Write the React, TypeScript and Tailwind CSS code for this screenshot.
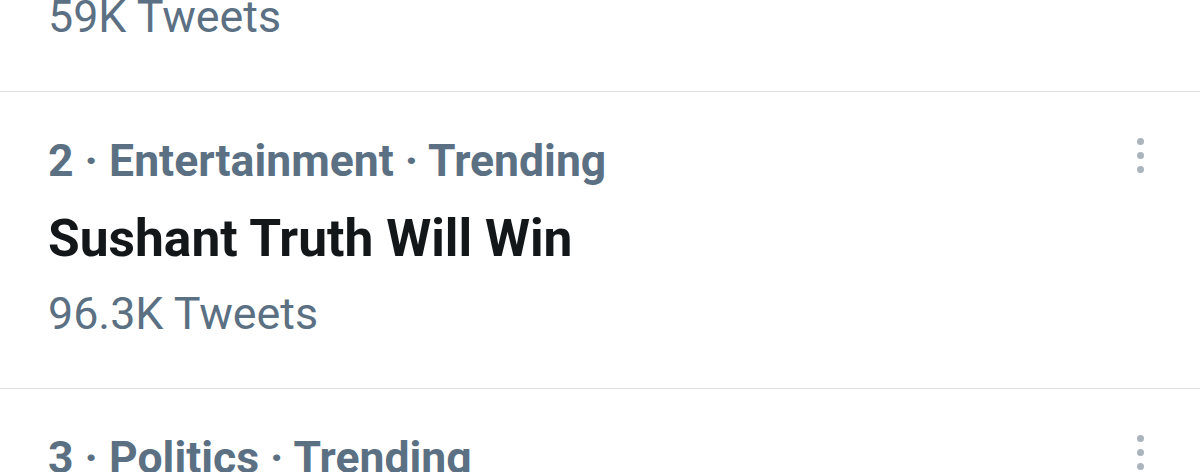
const trends = [
  { rank: 2, category: 'Entertainment', title: 'Sushant Truth Will Win', count: '96.3K Tweets' },
  { rank: 3, category: 'Politics', title: 'Rahul Gandhi', count: '41.2K Tweets' },
];

function MoreIcon() {
  return (
    <div className="flex flex-col gap-[7px] pt-[7px]">
      <span className="h-[7px] w-[7px] rounded-full bg-[#aab4bd]" />
      <span className="h-[7px] w-[7px] rounded-full bg-[#aab4bd]" />
      <span className="h-[7px] w-[7px] rounded-full bg-[#aab4bd]" />
    </div>
  );
}

function TrendRow({ rank, category, title, count }: (typeof trends)[number]) {
  return (
    <div className="flex border-t border-[#dde1e4] pl-12 pr-[56px] pt-[39px] pb-[44px]">
      <div className="flex-1">
        <div className="text-[44.5px] font-bold leading-[60px] text-[#5b7083]">
          {rank} · {category} · Trending
        </div>
        <div className="mt-[12px] text-[51.5px] font-bold leading-[72px] text-[#14171a]">{title}</div>
        <div className="mt-[9px] text-[44.8px] leading-[60px] text-[#5b7083]">{count}</div>
      </div>
      <MoreIcon />
    </div>
  );
}

export default function App() {
  return (
    <div className="h-[472px] w-[1200px] overflow-hidden bg-white" style={{ fontFamily: 'Roboto, "Noto Sans", sans-serif' }}>
      <div className="mt-[-13px] pl-12 pb-[44px] text-[44.8px] leading-[60px] text-[#5b7083]">59K Tweets</div>
      {trends.map((t) => (
        <TrendRow key={t.rank} {...t} />
      ))}
    </div>
  );
}
